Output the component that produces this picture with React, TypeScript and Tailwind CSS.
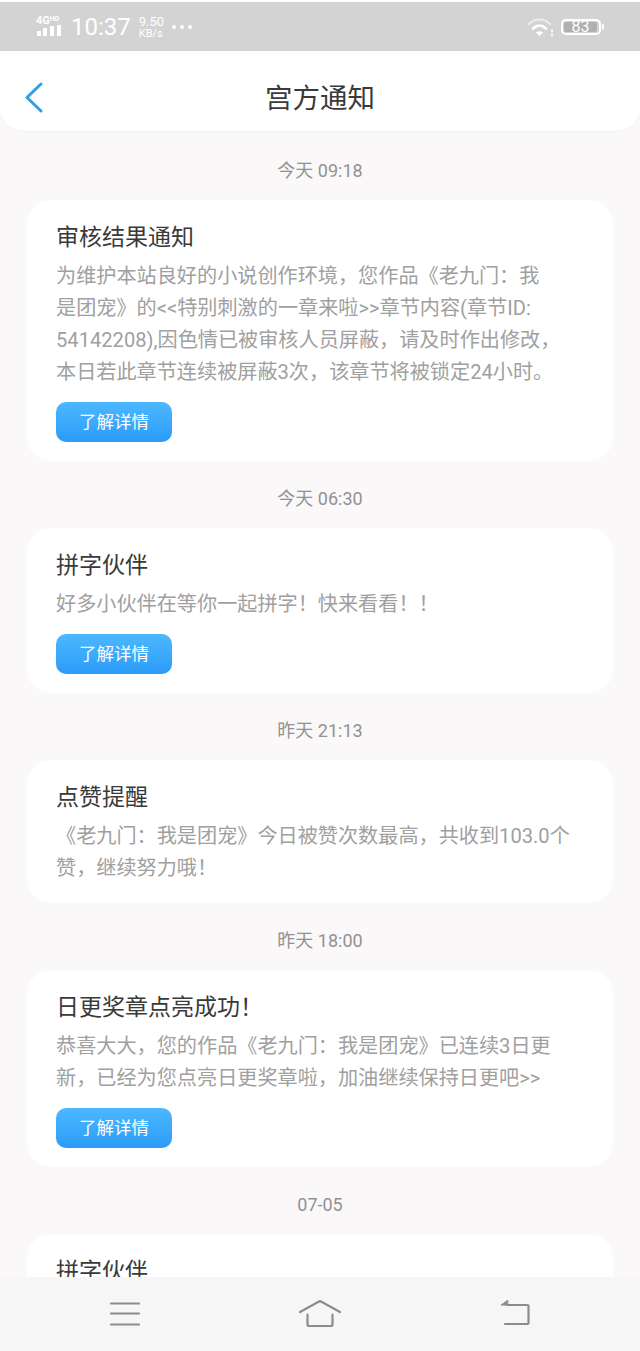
const font = { fontFamily: 'Roboto, "Noto Sans CJK SC", "Noto Sans", sans-serif' };

type Notice = {
  time: string;
  title: string;
  lines: string[];
  hasButton?: boolean;
};

const notices: Notice[] = [
  {
    time: "今天 09:18",
    title: "审核结果通知",
    lines: [
      "为维护本站良好的小说创作环境，您作品《老九门：我",
      "是团宠》的<<特别刺激的一章来啦>>章节内容(章节ID:",
      "54142208),因色情已被审核人员屏蔽，请及时作出修改，",
      "本日若此章节连续被屏蔽3次，该章节将被锁定24小时。",
    ],
    hasButton: true,
  },
  {
    time: "今天 06:30",
    title: "拼字伙伴",
    lines: ["好多小伙伴在等你一起拼字！快来看看！！"],
    hasButton: true,
  },
  {
    time: "昨天 21:13",
    title: "点赞提醒",
    lines: ["《老九门：我是团宠》今日被赞次数最高，共收到103.0个", "赞，继续努力哦！"],
  },
  {
    time: "昨天 18:00",
    title: "日更奖章点亮成功！",
    lines: ["恭喜大大，您的作品《老九门：我是团宠》已连续3日更", "新，已经为您点亮日更奖章啦，加油继续保持日更吧>>"],
    hasButton: true,
  },
];

function StatusBar() {
  return (
    <div className="mt-[2px] flex h-[49px] shrink-0 items-center justify-between bg-[#d3d3d3] pl-[36px] pr-[36px] text-white">
      <div className="flex items-center">
        <div className="flex w-[27px] flex-col items-start">
          <span className="whitespace-nowrap text-[11px] font-bold leading-[9px]">
            4G<span className="align-top text-[7px] leading-[7px]">HD</span>
          </span>
          <svg width="26" height="12" viewBox="0 0 26 12" fill="currentColor">
            <rect x="1" y="6" width="4" height="5" />
            <rect x="7" y="3" width="4" height="8" />
            <rect x="14" y="1" width="4" height="10" />
            <rect x="21" y="0" width="4" height="11" />
          </svg>
        </div>
        <span className="ml-[8px] text-[24px] leading-none">10:37</span>
        <div className="ml-[8px] flex flex-col text-[11px] leading-[11px]">
          <span className="text-[13px] leading-[13px]">9.50</span>
          <span>KB/s</span>
        </div>
        <div className="ml-[8px] flex gap-[4px]">
          <span className="h-[4px] w-[4px] rounded-full bg-white" />
          <span className="h-[4px] w-[4px] rounded-full bg-white" />
          <span className="h-[4px] w-[4px] rounded-full bg-white" />
        </div>
      </div>
      <div className="flex items-center">
        <svg width="28" height="22" viewBox="0 0 28 22" fill="none" stroke="currentColor" strokeLinecap="round">
          <path d="M2 8C8 2 17 2 23 8" strokeWidth="2" opacity="0.6" />
          <path d="M6 12.5C10 8.5 15 8.5 19 12.5" strokeWidth="2.6" />
          <path d="M12.5 20l-3.5-3.5c2-1.6 5-1.6 7 0z" fill="currentColor" stroke="none" />
          <path d="M25 14v2M25 18v2" strokeWidth="1.6" />
        </svg>
        <div className="ml-[6px] flex h-[16px] w-[40px] items-center rounded-[5px] border-2 border-white p-[1px]">
          <div className="flex h-full w-[33px] items-center justify-center rounded-[2px] bg-[#b0b0b0] text-[16px] leading-none">
            83
          </div>
        </div>
        <span className="ml-[1px] h-[6px] w-[2px] rounded-r-sm bg-white" />
      </div>
    </div>
  );
}

function Header() {
  return (
    <div className="relative flex h-[80px] shrink-0 items-center justify-center rounded-b-[24px] bg-white pt-[16px] shadow-[0_1px_2px_rgba(0,0,0,0.03)]">
      <svg className="absolute left-[24px] top-[30px]" width="20" height="32" viewBox="0 0 20 32" fill="none" stroke="#2e9fe6" strokeWidth="3" strokeLinecap="round" strokeLinejoin="round">
        <path d="M17 3L3 16.5 17 30" />
      </svg>
      <h1 className="text-[27.5px] leading-none text-[#3a3a3a]">宫方通知</h1>
    </div>
  );
}

function DetailButton() {
  return (
    <button className="mt-[14px] flex h-[40px] w-[116px] items-center justify-center rounded-[10px] bg-gradient-to-b from-[#4cb8ff] to-[#2b9bf8] text-[17.5px] text-white">
      了解详情
    </button>
  );
}

function NoticeCard({ notice }: { notice: Notice }) {
  return (
    <div>
      <div className="flex h-[67px] items-start justify-center pt-[28px] text-[18px] leading-[20px] text-[#929292]">{notice.time}</div>
      <div className="rounded-[24px] bg-white pb-[19px] pl-[29px] pr-[20px] pt-[21px]">
        <h2 className="text-[23px] leading-[34px] text-[#3a3a3a]">{notice.title}</h2>
        <div className="mt-[5px] text-[20.15px] leading-[32px] text-[#a0a0a0]">
          {notice.lines.map((line) => (
            <div key={line} className="whitespace-nowrap">
              {line}
            </div>
          ))}
        </div>
        {notice.hasButton && <DetailButton />}
      </div>
    </div>
  );
}

function BottomNav() {
  return (
    <div className="flex h-[74px] shrink-0 items-start justify-between bg-[#f6f6f6] pl-[110px] pr-[109px] pt-[22px]">
      <svg width="30" height="28" viewBox="0 0 30 28" fill="none" stroke="#8c8c8c" strokeWidth="2.2" strokeLinecap="round">
        <path d="M1 4.5h28M1 14.5h28M1 25.5h28" />
      </svg>
      <svg width="42" height="32" viewBox="0 0 42 32" fill="none" stroke="#8c8c8c" strokeWidth="2.2" strokeLinecap="round" strokeLinejoin="round">
        <path d="M1 13L21 2l20 11" />
        <path d="M8.5 15.5v10c0 1 .5 1.5 1.5 1.5h22c1 0 1.5-.5 1.5-1.5v-10" />
      </svg>
      <svg width="32" height="30" viewBox="0 0 32 30" fill="none" stroke="#8c8c8c" strokeWidth="2.2" strokeLinecap="round" strokeLinejoin="round">
        <path d="M8 6h20.5c.8 0 1 .3 1 1v17c0 .7-.3 1-1 1H6" />
        <path d="M8.5 1.5L2 6h6.5z" fill="#8c8c8c" strokeWidth="1" />
      </svg>
    </div>
  );
}

export default function App() {
  return (
    <div className="flex h-[1351px] w-[640px] flex-col overflow-hidden bg-white" style={font}>
      <StatusBar />
      <div className="flex min-h-0 flex-1 flex-col overflow-hidden bg-[#faf8f9]">
        <Header />
        <div className="min-h-0 flex-1 overflow-hidden px-[27px] pt-[2px]">
          {notices.map((n) => (
            <NoticeCard key={n.time} notice={n} />
          ))}
          <NoticeCard notice={{ time: "07-05", title: "拼字伙伴", lines: [] }} />
        </div>
      </div>
      <BottomNav />
    </div>
  );
}
